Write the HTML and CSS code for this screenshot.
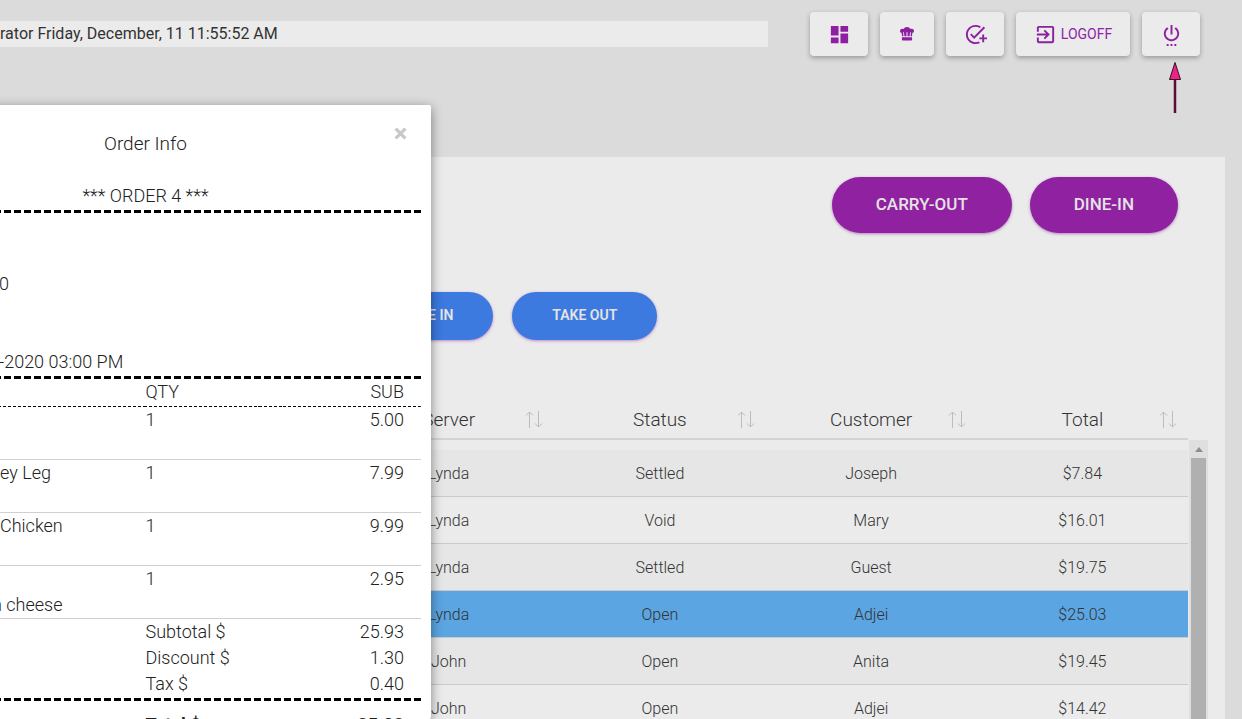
FILE: index.html
```html
<!DOCTYPE html>
<html lang="en">
<head>
<meta charset="utf-8">
<title>Orders</title>
<link rel="stylesheet" href="styles.css">
</head>
<body>
<header class="topbar">
  <div class="status">rator Friday, December, 11 11:55:52 AM</div>
  <nav class="tools">
    <button class="tool" aria-label="Dashboard"><svg class="icon" viewBox="0 0 24 24"><path d="M3 13h8V3H3v10zm0 8h8v-6H3v6zm10 0h8V11h-8v10zm0-18v6h8V3h-8z"/></svg></button>
    <button class="tool tool-narrow" aria-label="Kitchen"><svg class="icon icon-hat" viewBox="0 0 14 14"><path d="M2 9.200 1.600 5.800C.6 5.600 0 4.900 0 3.900 0 2.700.9 1.700 2.200 1.700c.5 0 .9.100 1.300.3C4.200.800 5.400 0 7 0s2.800.8 3.500 2c.4-.2.8-.3 1.300-.3C13.100 1.700 14 2.700 14 3.900c0 1-.6 1.700-1.600 1.900L12 9.200h-1.500l.4-4h-.8l-.5 4H7.500v-4h-1v4H4.400l-.5-4h-.8l.4 4zM1.900 10.300h10.200v2.200c0 .5-.3.900-.8.900H2.700c-.5 0-.8-.4-.8-.9z"/></svg></button>
    <button class="tool" aria-label="Add task"><svg class="icon" viewBox="0 0 24 24"><path d="M22 5.180 10.590 16.600l-4.240-4.240 1.410-1.410 2.830 2.830 10-10L22 5.180zM12 20c-4.410 0-8-3.590-8-8s3.590-8 8-8c1.570 0 3.040.46 4.280 1.250l1.450-1.450C16.100 2.670 14.130 2 12 2 6.480 2 2 6.480 2 12s4.480 10 10 10c1.730 0 3.360-.44 4.780-1.220l-1.500-1.500c-1 .46-2.110.72-3.280.72zm7-5h-3v2h3v3h2v-3h3v-2h-3v-3h-2v3z"/></svg></button>
    <button class="tool tool-wide"><svg class="icon" viewBox="0 0 24 24"><path d="M10.090 15.590 11.500 17l5-5-5-5-1.410 1.410L12.670 11H3v2h9.670l-2.580 2.590zM19 3H5c-1.110 0-2 .9-2 2v4h2V5h14v14H5v-4H3v4c0 1.100.89 2 2 2h14c1.100 0 2-.9 2-2V5c0-1.100-.9-2-2-2z"/></svg>LOGOFF</button>
    <button class="tool" aria-label="Power"><svg class="icon" viewBox="0 0 24 24"><path d="M7 24h2v-2H7v2zm4 0h2v-2h-2v2zm2-22h-2v10h2V2zm3.560 2.440-1.450 1.450C16.840 6.940 18 8.830 18 11c0 3.310-2.690 6-6 6s-6-2.690-6-6c0-2.170 1.160-4.060 2.880-5.120L7.440 4.440C5.360 5.880 4 8.280 4 11c0 4.420 3.580 8 8 8s8-3.580 8-8c0-2.720-1.360-5.120-3.440-6.560zM15 24h2v-2h-2v2z"/></svg></button>
  </nav>
  <svg class="pointer" viewBox="0 0 14 52"><path d="M7 18v34" stroke="#5c0b36" stroke-width="2.500"/><path d="M7 1.500 12.500 18.500h-11z" fill="#f0208a" stroke="#33121f"/></svg>
</header>

<main class="card">
  <div class="order-types">
    <button class="pill pill-purple">CARRY-OUT</button>
    <button class="pill pill-purple">DINE-IN</button>
  </div>
  <div class="filters">
    <button class="pill pill-blue">DINE IN</button>
    <button class="pill pill-blue">TAKE OUT</button>
  </div>
  <div class="orders-wrap">
    <div class="orders-main">
      <table class="orders">
        <thead>
          <tr>
            <th><div class="head">Server<svg class="sort" viewBox="0 0 18 17"><path d="M4.500 17V1M1 4.500 4.500 1 8 4.500M13.500 0v16M10 12.500l3.500 3.500 3.500-3.500"/></svg></div></th>
            <th><div class="head">Status<svg class="sort" viewBox="0 0 18 17"><path d="M4.500 17V1M1 4.500 4.500 1 8 4.500M13.500 0v16M10 12.500l3.500 3.500 3.500-3.500"/></svg></div></th>
            <th><div class="head">Customer<svg class="sort" viewBox="0 0 18 17"><path d="M4.500 17V1M1 4.500 4.500 1 8 4.500M13.500 0v16M10 12.500l3.500 3.500 3.500-3.500"/></svg></div></th>
            <th><div class="head">Total<svg class="sort" viewBox="0 0 18 17"><path d="M4.500 17V1M1 4.500 4.500 1 8 4.500M13.500 0v16M10 12.500l3.500 3.500 3.500-3.500"/></svg></div></th>
          </tr>
        </thead>
        <tbody>
          <tr><td>Lynda</td><td>Settled</td><td>Joseph</td><td>$7.84</td></tr>
          <tr><td>Lynda</td><td>Void</td><td>Mary</td><td>$16.01</td></tr>
          <tr><td>Lynda</td><td>Settled</td><td>Guest</td><td>$19.75</td></tr>
          <tr class="selected"><td>Lynda</td><td>Open</td><td>Adjei</td><td>$25.03</td></tr>
          <tr><td>John</td><td>Open</td><td>Anita</td><td>$19.45</td></tr>
          <tr><td>John</td><td>Open</td><td>Adjei</td><td>$14.42</td></tr>
        </tbody>
      </table>
    </div>
    <div class="scrollbar"><span class="scroll-up"></span><span class="scroll-thumb"></span></div>
  </div>
</main>

<section class="modal" role="dialog" aria-labelledby="modal-title">
  <button class="close" aria-label="Close"><svg viewBox="0 0 12 12"><path d="M1.500 1.500l9 9m0-9l-9 9"/></svg></button>
  <h2 class="modal-title" id="modal-title">Order Info</h2>
  <p class="order-no">*** ORDER 4 ***</p>
  <div class="dashes"></div>
  <div class="meta">
    <p>0</p>
    <p>-2020 03:00 PM</p>
  </div>
  <div class="dashes"></div>
  <table class="receipt">
    <thead>
      <tr><th></th><th>QTY</th><th class="amount">SUB</th></tr>
    </thead>
    <tbody class="items">
      <tr><td></td><td>1</td><td class="amount">5.00</td></tr>
      <tr><td>ey Leg</td><td>1</td><td class="amount">7.99</td></tr>
      <tr><td>Chicken</td><td>1</td><td class="amount">9.99</td></tr>
      <tr><td><div class="extra">n cheese</div></td><td>1</td><td class="amount">2.95</td></tr>
    </tbody>
    <tbody>
      <tr><td></td><td>Subtotal $</td><td class="amount">25.93</td></tr>
      <tr><td></td><td>Discount $</td><td class="amount">1.30</td></tr>
      <tr><td></td><td>Tax $</td><td class="amount">0.40</td></tr>
    </tbody>
  </table>
  <div class="dashes"></div>
  <table class="receipt grand">
    <tbody>
      <tr><td></td><td>Total $</td><td class="amount">25.03</td></tr>
    </tbody>
  </table>
</section>
</body>
</html>
```
FILE: styles.css
```css
* {
  box-sizing: border-box;
}

body {
  margin: 0;
  height: 100vh;
  overflow: hidden;
  display: flex;
  flex-direction: column;
  background: #dbdbdb;
  color: #333;
  font-family: Roboto, "Liberation Sans", sans-serif;
}

button {
  border: 0;
  margin: 0;
  padding: 0;
  font-family: inherit;
  cursor: pointer;
}

p,
h2 {
  margin: 0;
}

.topbar {
  position: relative;
  display: flex;
  gap: 42px;
  padding: 12px 42px 0 0;
}

.status {
  flex: 1;
  height: 26px;
  margin-top: 9px;
  background: #ebebeb;
  font-size: 16px;
  line-height: 25px;
}

.tools {
  display: flex;
  gap: 12px;
}

.tool {
  display: flex;
  align-items: center;
  justify-content: center;
  gap: 4px;
  width: 58px;
  height: 44px;
  border-radius: 4px;
  background: #ebebeb;
  color: #8e24aa;
  font-size: 14px;
  box-shadow: 0 2px 5px rgba(0, 0, 0, 0.3);
}

.tool-narrow {
  width: 54px;
}

.tool-wide {
  width: 114px;
}

.icon {
  width: 23px;
  height: 23px;
  fill: #8e1fa3;
}

.icon-hat {
  width: 14px;
  height: 14px;
}

.pointer {
  position: absolute;
  top: 61px;
  right: 60px;
  width: 14px;
  height: 52px;
}

.card {
  flex: 1;
  min-height: 0;
  margin: 101px 17px 0 0;
  padding: 20px 17px 0 0;
  background: #ebebeb;
  overflow: hidden;
}

.order-types {
  display: flex;
  justify-content: flex-end;
  gap: 18px;
  padding-right: 30px;
}

.pill {
  border-radius: 28px;
  color: #e4e4e4;
}

.pill-purple {
  height: 56px;
  padding: 0 44px 2px;
  background: #9022a1;
  font-size: 17px;
  font-weight: 500;
  box-shadow: 0 1px 3px rgba(120, 30, 140, 0.5);
}

.filters {
  display: flex;
  gap: 19px;
  margin-top: 59px;
  padding-left: 365px;
}

.pill-blue {
  height: 48px;
  padding: 0 40px 2px;
  background: #3c7ae0;
  font-size: 14px;
  font-weight: 600;
  box-shadow: 0 1px 3px rgba(156, 39, 176, 0.5);
}

.orders-wrap {
  display: flex;
  align-items: flex-start;
  margin-top: 60px;
  padding-left: 343px;
}

.orders-main {
  flex: 1;
}

.orders {
  width: 100%;
  table-layout: fixed;
  border-collapse: separate;
  border-spacing: 0;
  text-align: center;
  font-weight: 300;
}

.orders th {
  height: 40px;
  padding: 0;
  border-bottom: 2px solid #d3d3d3;
  font-size: 19px;
  font-weight: 300;
}

.head {
  position: relative;
}

.sort {
  position: absolute;
  right: 11px;
  top: 3px;
  width: 18px;
  height: 17px;
  fill: none;
  stroke: #bcbcbc;
}

.orders tbody::before {
  content: "";
  display: block;
  height: 10px;
}

.orders td {
  height: 47px;
  padding: 0;
  border-bottom: 1px solid #cacaca;
  font-size: 16px;
}

.orders tbody tr:nth-child(odd) {
  background: #e6e6e6;
}

.orders tbody .selected {
  background: #5ba5e3;
}

.scrollbar {
  display: flex;
  flex-direction: column;
  align-items: center;
  width: 20px;
  height: 400px;
  margin-top: 40px;
  border-left: 1px solid #ebebeb;
  background: #dfdfdf;
}

.scroll-up {
  height: 12px;
  border: 4px solid transparent;
  border-top-width: 3px;
  border-bottom: 5px solid #8f8f8f;
  margin-bottom: 6px;
}

.scroll-thumb {
  flex: 1;
  width: 15px;
  background: #b0b0b0;
}

.modal {
  position: absolute;
  top: 105px;
  left: -140px;
  bottom: 0;
  width: 571px;
  padding: 26px 10px 0;
  overflow: hidden;
  border-radius: 2px;
  background: #fff;
  box-shadow: 0 3px 12px rgba(0, 0, 0, 0.45);
  color: #222;
  font-size: 18px;
  font-weight: 300;
  line-height: 26px;
}

.close {
  position: absolute;
  top: 22px;
  right: 24px;
  width: 13px;
  height: 13px;
  background: none;
}

.close svg {
  display: block;
  stroke: #c8c8c8;
  stroke-width: 3;
}

.modal-title {
  font-size: 19px;
  font-weight: 300;
  text-align: center;
}

.order-no {
  margin-top: 26px;
  text-align: center;
}

.dashes {
  height: 4px;
  border-bottom: 1px solid #fff;
  background: repeating-linear-gradient(to left, #000 0 7px, #fff 7px 10px);
  margin-top: 1px;
}

.meta {
  display: flex;
  flex-direction: column;
  gap: 52px;
  padding: 57px 0 0 129px;
}

.receipt {
  width: 100%;
  table-layout: fixed;
  border-collapse: separate;
  border-spacing: 0;
  text-align: left;
}

.receipt th,
.receipt td {
  padding: 0;
  vertical-align: top;
  font-weight: 300;
}

.receipt th:first-child,
.receipt td:first-child {
  width: 50%;
  padding-left: 130px;
}

.receipt thead tr {
  background: repeating-linear-gradient(to left, #000 0 3px, #fff 3px 5px) bottom / 100% 1px no-repeat;
}

.receipt th {
  height: 27px;
  line-height: 24px;
}

.receipt .items td {
  height: 53px;
  border-bottom: 1px solid #d0d0d0;
}

.receipt .amount {
  padding-right: 17px;
  text-align: right;
}

.extra {
  padding-top: 26px;
  margin-left: -8px;
}

.grand {
  margin-top: 10px;
}

.grand td {
  font-weight: 700;
}
```
